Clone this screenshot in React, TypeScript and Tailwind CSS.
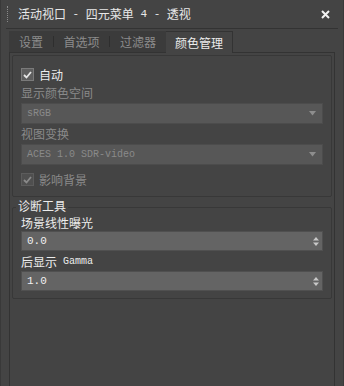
import React from "react";

const cjk = { fontFamily: '"Noto Sans CJK SC", "Noto Sans", sans-serif' };
const mono = { fontFamily: '"Liberation Mono", "DejaVu Sans Mono", monospace' };

function Check({ disabled }: { disabled?: boolean }) {
  return (
    <div
      className={
        "w-[13px] h-[13px] flex items-center justify-center border " +
        (disabled ? "bg-[#4f4f4f] border-[#5c5c5c]" : "bg-[#5e5e5e] border-[#7a7a7a]")
      }
    >
      <svg width="9" height="8" viewBox="0 0 9 8">
        <path
          d="M1 4 L3.5 6.5 L8 1"
          fill="none"
          stroke={disabled ? "#8a8a8a" : "#e6e6e6"}
          strokeWidth="1.8"
        />
      </svg>
    </div>
  );
}

function Dropdown({ text }: { text: string }) {
  return (
    <div className="h-[21px] bg-[#575757] border border-[#4c4c4c] flex items-center pl-[5px] pr-[6px]">
      <span className="text-[10px] text-[#8a8a8a] flex-1" style={mono}>
        {text}
      </span>
      <svg width="7" height="5" viewBox="0 0 7 5">
        <path d="M0 0 L7 0 L3.5 4.5 Z" fill="#8e8e8e" />
      </svg>
    </div>
  );
}

function Spinner({ text }: { text: string }) {
  return (
    <div className="h-[20px] bg-[#646464] border border-[#505050] flex items-center pl-[5px] pr-[3px]">
      <span className="text-[11px] text-[#f0f0f0] flex-1" style={mono}>
        {text}
      </span>
      <svg width="6" height="11" viewBox="0 0 6 11">
        <path d="M0 4.5 L6 4.5 L3 1 Z" fill="#c8c8c8" />
        <path d="M0 6.5 L6 6.5 L3 10 Z" fill="#c8c8c8" />
      </svg>
    </div>
  );
}

export default function App() {
  return (
    <div
      className="w-[344px] h-[386px] bg-[#444444] text-[12px] leading-none flex flex-col overflow-hidden border-l border-r border-[#393939]"
      style={cjk}
    >
      {/* title bar */}
      <div className="h-[28px] flex items-center relative">
        <div className="ml-[6px] w-[2px] h-[16px] border-l border-dotted border-[#8a8a8a]" />
        <div className="ml-[9px] text-[#e8e8e8] text-[12px] flex items-center whitespace-pre">
          <span>活动视口</span>
          <span className="text-[11px]" style={mono}> - </span>
          <span>四元菜单</span>
          <span className="text-[11px]" style={mono}> 4 - </span>
          <span>透视</span>
        </div>
        <div className="ml-auto mr-[13px]">
          <svg width="9" height="9" viewBox="0 0 9 9">
            <path d="M1 1 L8 8 M8 1 L1 8" stroke="#f2f2f2" strokeWidth="2" />
          </svg>
        </div>
      </div>
      <div className="mx-[5px] h-px bg-[#333333]" />

      {/* body */}
      <div className="flex-1 flex flex-col px-[8px]">
        <div className="h-[23px] flex items-end">
          <div className="flex h-[21px] bg-[#3b3b3b] items-center text-[#8c8c8c]">
            <div className="w-[44px] text-center">设置</div>
            <div className="w-px h-[11px] bg-[#2e2e2e]" />
            <div className="w-[55px] text-center">首选项</div>
            <div className="w-px h-[11px] bg-[#2e2e2e]" />
            <div className="w-[56px] text-center">过滤器</div>
          </div>
          <div className="h-[22px] w-[67px] border-t border-r border-[#333333] bg-[#444444] text-[#ececec] flex items-center justify-center -mb-px relative z-10">
            颜色管理
          </div>
          <div className="flex-1" />
        </div>

        <div className="flex-1 border-l border-r border-t border-[#333333] pl-[2px] pr-[2px] pt-[2px] flex flex-col">
          {/* group 1 */}
          <div className="border border-[#383838] rounded-[2px] flex flex-col pl-[8px] pr-[8px] pt-[12px] pb-[10px]">
            <div className="flex items-center gap-[5px] h-[13px]">
              <Check />
              <span className="text-[#ececec]">自动</span>
            </div>
            <div className="mt-[4px] h-[15px] flex items-center text-[#8a8a8a]">显示颜色空间</div>
            <div className="mt-[3px]">
              <Dropdown text="sRGB" />
            </div>
            <div className="h-[20px] flex items-center text-[#8a8a8a]">视图变换</div>
            <Dropdown text="ACES 1.0 SDR-video" />
            <div className="mt-[8px] flex items-center gap-[5px] h-[13px]">
              <Check disabled />
              <span className="text-[#8a8a8a]">影响背景</span>
            </div>
          </div>

          {/* group 2 */}
          <div className="mt-[10px] border border-[#383838] rounded-[2px] relative flex flex-col pl-[8px] pr-[8px] pt-[7px] pb-[7px]">
            <div className="absolute left-[3px] -top-[9px] px-[2px] bg-[#444444] text-[#ececec] h-[14px] flex items-center">
              诊断工具
            </div>
            <div className="h-[15px] flex items-center text-[#ececec]">场景线性曝光</div>
            <div className="mt-[1px]">
              <Spinner text="0.0" />
            </div>
            <div className="h-[20px] pt-[2px] flex items-center text-[#ececec] whitespace-pre">
              <span>后显示</span>
              <span className="text-[10px]" style={mono}> Gamma</span>
            </div>
            <Spinner text="1.0" />
          </div>
        </div>
      </div>
    </div>
  );
}
